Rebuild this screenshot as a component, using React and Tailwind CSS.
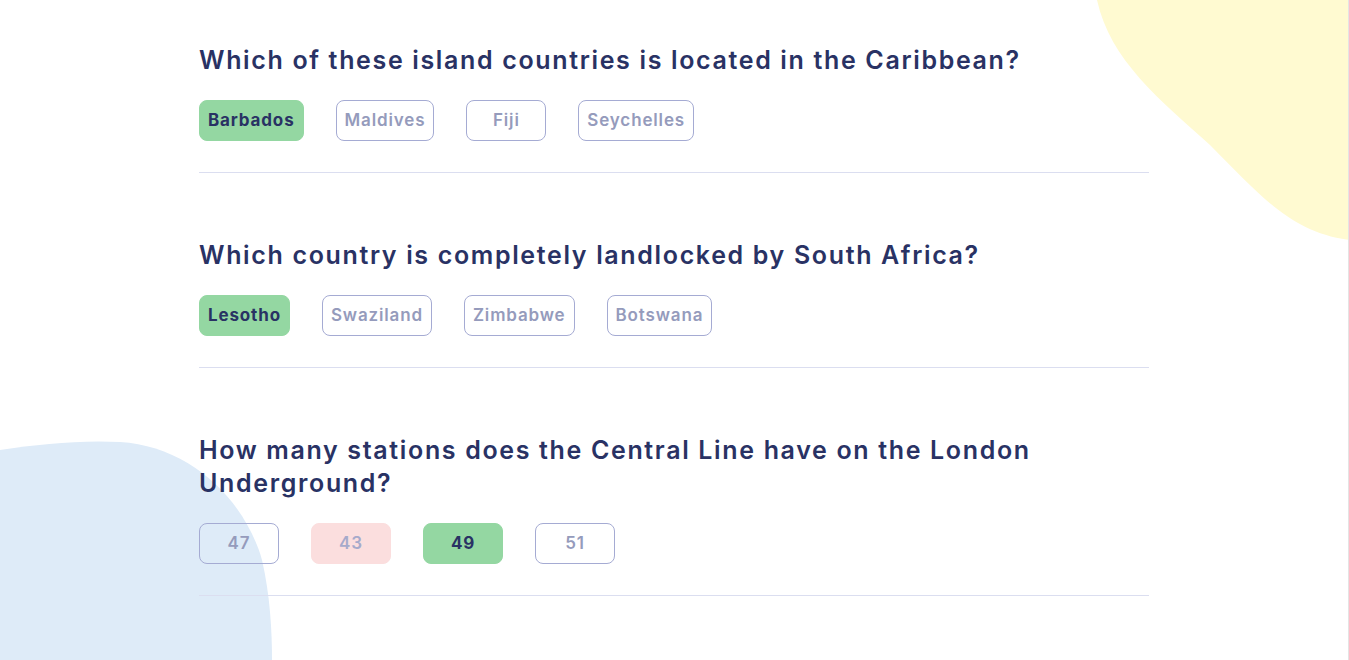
import React from "react";

const questions = [
  {
    q: "Which of these island countries is located in the Caribbean?",
    answers: [
      { label: "Barbados", state: "correct" },
      { label: "Maldives" },
      { label: "Fiji" },
      { label: "Seychelles" },
    ],
  },
  {
    q: "Which country is completely landlocked by South Africa?",
    answers: [
      { label: "Lesotho", state: "correct" },
      { label: "Swaziland" },
      { label: "Zimbabwe" },
      { label: "Botswana" },
    ],
  },
  {
    q: "How many stations does the Central Line have on the London Underground?",
    answers: [
      { label: "47" },
      { label: "43", state: "wrong" },
      { label: "49", state: "correct" },
      { label: "51" },
    ],
  },
];

function Answer({ label, state }) {
  const styles =
    state === "correct"
      ? "bg-[#94D7A2] border-[#94D7A2] text-[#293264] font-bold"
      : state === "wrong"
      ? "bg-[#FBDEDE] border-[#FBDEDE] text-[#A6AACB] font-semibold"
      : "bg-transparent border-[#A5ABD3] text-[#959BBC] font-semibold";
  return (
    <button
      type="button"
      className={`min-w-[80px] h-[41px] px-[8px] rounded-[8px] border text-[17px] tracking-[0.05em] ${styles}`}
    >
      {label}
    </button>
  );
}

export default function App() {
  return (
    <div
      className="relative min-h-screen w-[1349px] overflow-hidden bg-white border-r border-[#E4E4E4]"
      style={{ fontFamily: "Inter, 'Noto Sans', sans-serif" }}
    >
      {/* decorative blobs */}
      <svg className="absolute inset-0 w-[1349px] h-[660px] pointer-events-none" viewBox="0 0 1349 660">
        <path
          d="M1097,0 C1110,60 1160,100 1210,145 C1260,195 1290,232 1349,240 L1349,0 Z"
          fill="#FFFAD1"
        />
        <path
          d="M0,450 C40,444 80,440 120,442 C190,446 245,500 262,560 C270,595 272,630 272,660 L0,660 Z"
          fill="#DEEBF8"
        />
      </svg>

      <main className="relative mx-auto w-[950px] pt-[42px]">
        {questions.map((item, i) => (
          <section
            key={i}
            className={`border-b border-[#DBDEF0] pb-[31px] ${i > 0 ? "pt-[64px]" : ""}`}
          >
            <h2 className="pt-[2px] text-[25px] leading-[33px] font-semibold text-[#293264] tracking-[1.65px]">
              {item.q}
            </h2>
            <div className="flex gap-[32px] mt-[23px]">
              {item.answers.map((a) => (
                <Answer key={a.label} {...a} />
              ))}
            </div>
          </section>
        ))}
      </main>
    </div>
  );
}
